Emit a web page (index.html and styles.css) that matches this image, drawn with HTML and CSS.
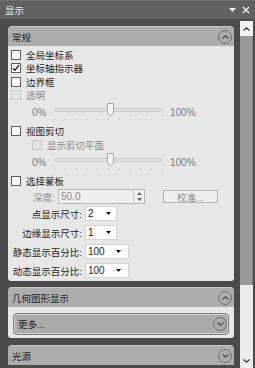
FILE: index.html
```html
<!DOCTYPE html>
<html lang="zh-CN">
<head>
    <meta charset="UTF-8">
    <title>显示</title>
    <link rel="stylesheet" href="styles.css">
</head>
<body>
    <div class="titlebar">
        <span class="title">显示</span>
        <div class="title-icons">
            <svg width="7" height="4" viewBox="0 0 7 4"><path d="M0 0H7L3.5 4Z" fill="#f2f2f2"/></svg>
            <svg width="8" height="8" viewBox="0 0 8 8"><path d="M1 1L7 7M7 1L1 7" stroke="#f2f2f2" stroke-width="1.4"/></svg>
        </div>
    </div>

    <div class="frame">
        <div class="panels">
            <!-- 常规 -->
            <div class="section-header">
                <span>常规</span>
                <span class="circle-btn"><svg width="7" height="4" viewBox="0 0 7 4"><path d="M0.5 3.5L3.5 0.8L6.5 3.5" fill="none" stroke="#4a4a4a" stroke-width="1.2"/></svg></span>
            </div>
            <div class="section-body general">
                <div class="check-row"><span class="box"></span>全局坐标系</div>
                <div class="check-row"><span class="box"><svg width="9" height="8" viewBox="0 0 9 8"><path d="M1.2 4.2L3.4 6.6L7.8 0.8" fill="none" stroke="#111" stroke-width="1.5"/></svg></span>坐标轴指示器</div>
                <div class="check-row"><span class="box"></span>边界框</div>
                <div class="check-row disabled"><span class="box"></span>透明</div>
                <div class="slider-row">
                    <span class="pct">0%</span>
                    <div class="slider">
                        <div class="track"></div>
                        <div class="ticks"><i></i><i></i><i></i><i></i><i></i><i></i><i></i><i></i><i></i><i></i><i></i></div>
                        <svg class="thumb" width="7" height="14" viewBox="0 0 7 14"><path d="M0.5 0.5H6.5V10L3.5 13.3L0.5 10Z" fill="#f4f4f4" stroke="#a8a8a8"/></svg>
                    </div>
                    <span class="pct">100%</span>
                </div>
                <div class="check-row tall"><span class="box"></span>视图剪切</div>
                <div class="check-row tall indent disabled"><span class="box"></span>显示剪切平面</div>
                <div class="slider-row">
                    <span class="pct">0%</span>
                    <div class="slider">
                        <div class="track"></div>
                        <div class="ticks"><i></i><i></i><i></i><i></i><i></i><i></i><i></i><i></i><i></i><i></i><i></i></div>
                        <svg class="thumb" width="7" height="14" viewBox="0 0 7 14"><path d="M0.5 0.5H6.5V10L3.5 13.3L0.5 10Z" fill="#f4f4f4" stroke="#a8a8a8"/></svg>
                    </div>
                    <span class="pct">100%</span>
                </div>
                <div class="check-row tall"><span class="box"></span>选择蒙板</div>
                <div class="depth-row">
                    <span class="depth-label">深度:</span>
                    <div class="spin">
                        <span class="spin-value">50.0</span>
                        <div class="spin-arrows">
                            <svg width="5" height="3" viewBox="0 0 5 3"><path d="M0 3H5L2.5 0Z" fill="#666"/></svg>
                            <svg width="5" height="3" viewBox="0 0 5 3"><path d="M0 0H5L2.5 3Z" fill="#666"/></svg>
                        </div>
                    </div>
                    <span class="calib-btn">校准...</span>
                </div>
                <div class="field-row">
                    <span class="field-label">点显示尺寸:</span>
                    <div class="select"><span>2</span><svg width="5" height="3" viewBox="0 0 5 3"><path d="M0 0H5L2.5 3Z" fill="#111"/></svg></div>
                </div>
                <div class="field-row">
                    <span class="field-label">边缘显示尺寸:</span>
                    <div class="select"><span>1</span><svg width="5" height="3" viewBox="0 0 5 3"><path d="M0 0H5L2.5 3Z" fill="#111"/></svg></div>
                </div>
                <div class="field-row">
                    <span class="field-label">静态显示百分比:</span>
                    <div class="select wide"><span>100</span><svg width="5" height="3" viewBox="0 0 5 3"><path d="M0 0H5L2.5 3Z" fill="#111"/></svg></div>
                </div>
                <div class="field-row">
                    <span class="field-label">动态显示百分比:</span>
                    <div class="select wide"><span>100</span><svg width="5" height="3" viewBox="0 0 5 3"><path d="M0 0H5L2.5 3Z" fill="#111"/></svg></div>
                </div>
            </div>

            <!-- 几何图形显示 -->
            <div class="section-header gap">
                <span>几何图形显示</span>
                <span class="circle-btn"><svg width="7" height="4" viewBox="0 0 7 4"><path d="M0.5 3.5L3.5 0.8L6.5 3.5" fill="none" stroke="#4a4a4a" stroke-width="1.2"/></svg></span>
            </div>
            <div class="section-body more-body">
                <div class="more-btn">
                    <span>更多...</span>
                    <span class="circle-btn"><svg width="7" height="4" viewBox="0 0 7 4"><path d="M0.5 0.5L3.5 3.2L6.5 0.5" fill="none" stroke="#4a4a4a" stroke-width="1.2"/></svg></span>
                </div>
            </div>

            <!-- 光源 -->
            <div class="section-header gap-lg">
                <span>光源</span>
                <span class="circle-btn"><svg width="7" height="4" viewBox="0 0 7 4"><path d="M0.5 0.5L3.5 3.2L6.5 0.5" fill="none" stroke="#4a4a4a" stroke-width="1.2"/></svg></span>
            </div>
        </div>

        <div class="scrollbar">
            <div class="scroll-btn"><svg width="7" height="4" viewBox="0 0 7 4"><path d="M0.5 3.5L3.5 0.8L6.5 3.5" fill="none" stroke="#333" stroke-width="1.1"/></svg></div>
            <div class="scroll-thumb"></div>
            <div class="scroll-track"><svg width="7" height="4" viewBox="0 0 7 4"><path d="M0.5 0.5L3.5 3.2L6.5 0.5" fill="none" stroke="#333" stroke-width="1.1"/></svg></div>
        </div>
    </div>
</body>
</html>
```

FILE: styles.css
```css
:root {
    --frame: #4b4b4b;
    --title: #616161;
    --header: #adadad;
    --surface: #e7e7e7;
    --text: #1c1c1c;
    --muted: #8a8a8a;
}

* {
    box-sizing: border-box;
    margin: 0;
    padding: 0;
}

body {
    width: 255px;
    height: 368px;
    overflow: hidden;
    background: var(--frame);
    font-family: "Liberation Sans", "Noto Sans CJK SC", sans-serif;
    font-size: 9.5px;
    color: var(--text);
}

/* title bar */
.titlebar {
    height: 19px;
    background: var(--title);
    border-top: 1px solid #707070;
    display: flex;
    align-items: center;
    justify-content: space-between;
    padding: 0 5px;
    color: #ececec;
}

.title-icons {
    display: flex;
    align-items: center;
    gap: 6px;
}

.frame {
    display: flex;
    height: 349px;
}

.panels {
    width: 226px;
    margin-left: 8px;
    padding-top: 7px;
    display: flex;
    flex-direction: column;
}

/* section headers */
.section-header {
    height: 20px;
    flex-shrink: 0;
    background: var(--header);
    border-top: 1px solid #c6c6c6;
    border-radius: 4px 4px 0 0;
    display: flex;
    align-items: center;
    justify-content: space-between;
    padding: 0 2px 0 4px;
}

.section-header.gap {
    margin-top: 6px;
}

.section-header.gap-lg {
    margin-top: 7px;
}

.circle-btn {
    width: 14px;
    height: 14px;
    border: 1px solid #707070;
    border-radius: 50%;
    display: flex;
    align-items: center;
    justify-content: center;
}

.section-body {
    background: var(--surface);
    border-radius: 0 0 3px 3px;
    flex-shrink: 0;
}

.general {
    padding: 2px 0 3px 3px;
}

/* checkboxes */
.check-row {
    height: 13.5px;
    display: flex;
    align-items: center;
}

.check-row.tall {
    height: 14px;
}

.check-row.indent {
    padding-left: 21px;
}

.box {
    width: 10px;
    height: 10px;
    border: 1px solid #5c5c5c;
    background: #fff;
    margin-right: 5px;
    display: flex;
    align-items: center;
    justify-content: center;
}

.check-row.disabled {
    color: var(--muted);
}

.check-row.disabled .box {
    border-color: #c9c9c9;
    background: #e2e2e2;
}

/* sliders */
.slider-row {
    height: 22px;
    display: flex;
    align-items: flex-start;
    padding-left: 21px;
    padding-top: 5px;
    color: #7c7c7c;
    font-size: 10px;
}

.pct {
    width: 22px;
    line-height: 11px;
}

.slider {
    position: relative;
    width: 109px;
    height: 16px;
    margin-top: -4px;
    margin-right: 7px;
}

.track {
    position: absolute;
    left: 0;
    right: 0;
    top: 5px;
    height: 4px;
    border: 1px solid #cdcdcd;
    border-radius: 2px;
    background: #e0e0e0;
}

.ticks {
    position: absolute;
    left: 0;
    right: 0;
    top: 16px;
    display: flex;
    justify-content: space-between;
}

.ticks i {
    width: 1px;
    height: 1px;
    background: #b4b4b4;
}

.thumb {
    position: absolute;
    left: 53px;
    top: 0;
}

/* depth row */
.depth-row {
    height: 15px;
    margin-top: 1px;
    display: flex;
    align-items: center;
    padding-left: 22px;
    color: var(--muted);
}

.depth-label {
    width: 25px;
}

.spin {
    width: 87px;
    height: 15px;
    border: 1px solid #b9b9b9;
    background: #eeeeee;
    display: flex;
    align-items: center;
    justify-content: space-between;
    padding-left: 2px;
}

.spin-value {
    font-size: 10px;
}

.spin-arrows {
    width: 11px;
    height: 13px;
    border-left: 1px solid #cfcfcf;
    display: flex;
    flex-direction: column;
    align-items: center;
    justify-content: space-around;
}

.calib-btn {
    width: 55px;
    height: 13px;
    margin-left: 18px;
    border: 1px solid #b3b3b3;
    background: #efefef;
    display: flex;
    align-items: center;
    justify-content: center;
}

/* select rows */
.field-row {
    height: 15px;
    margin-top: 4px;
    display: flex;
    align-items: center;
}

.depth-row + .field-row {
    margin-top: 2px;
}

.field-label {
    width: 71px;
    text-align: right;
    margin-right: 3px;
}

.select {
    width: 32px;
    height: 15px;
    background: #fff;
    border: 1px solid #d4d4d4;
    display: flex;
    align-items: center;
    justify-content: space-between;
    padding: 0 5px 0 2px;
    font-size: 10px;
}

.select.wide {
    width: 44px;
    padding-right: 7px;
}

/* 更多 */
.more-body {
    padding: 6px 5px 3px 5px;
}

.more-btn {
    height: 22px;
    background: #aaaaaa;
    border: 1px solid #7e7e7e;
    border-radius: 4px;
    box-shadow: inset 0 0 0 1px #d2d2d2;
    display: flex;
    align-items: center;
    justify-content: space-between;
    padding: 0 1px 0 4px;
}

/* scrollbar */
.scrollbar {
    width: 13px;
    margin-left: 6px;
    margin-top: 2px;
    display: flex;
    flex-direction: column;
}

.scroll-btn {
    height: 15px;
    background: #f2f2f2;
    display: flex;
    align-items: center;
    justify-content: center;
}

.scroll-thumb {
    height: 249px;
    background: #999999;
    border-right: 1px solid #858585;
}

.scroll-track {
    flex-grow: 1;
    background: #ececec;
    display: flex;
    align-items: flex-end;
    justify-content: center;
    padding-bottom: 5px;
}
```
